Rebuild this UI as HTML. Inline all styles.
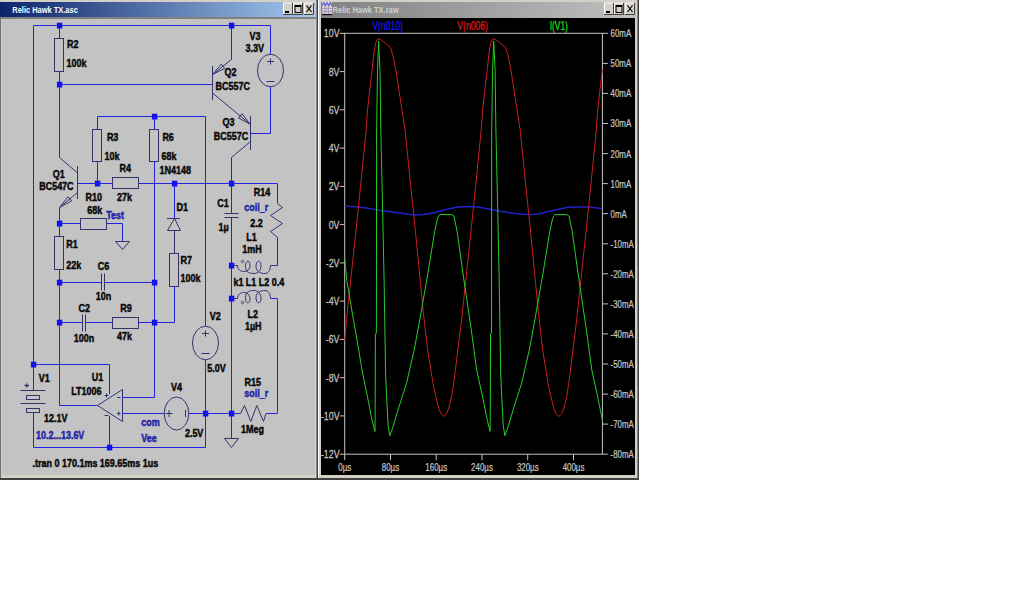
<!DOCTYPE html>
<html><head><meta charset="utf-8"><style>
html,body{margin:0;padding:0;background:#fff;width:1018px;height:591px;overflow:hidden}
svg{position:absolute;left:0;top:0}
text{font-family:"Liberation Sans",sans-serif}
</style></head><body>
<svg width="1018" height="591" viewBox="0 0 1018 591">
<defs>
<linearGradient id="ga" x1="0" x2="1" y1="0" y2="0"><stop offset="0" stop-color="#0a246a"/><stop offset="1" stop-color="#a6caf0"/></linearGradient>
<linearGradient id="gi" x1="0" x2="1" y1="0" y2="0"><stop offset="0" stop-color="#808080"/><stop offset="1" stop-color="#c0c0c0"/></linearGradient>
</defs>
<!-- top strip -->
<rect x="0" y="0" width="639" height="2" fill="#d4d0c8"/>
<!-- schematic window -->
<rect x="0" y="0" width="318" height="480" fill="#d4d0c8"/>
<rect x="0" y="478" width="318" height="2" fill="#404040"/>
<rect x="316.5" y="0" width="1.5" height="480" fill="#404040"/>
<rect x="0" y="17" width="316" height="2" fill="#808080"/>
<rect x="0" y="19" width="1" height="459" fill="#707070"/>
<rect x="0" y="2" width="316" height="15" fill="url(#ga)"/>
<rect x="2" y="19" width="313" height="456" fill="#c3c3c3"/>
<text transform="translate(12.3,13.2) scale(0.77,1)" fill="#ffffff" font-size="9.7" font-weight="bold">Relic Hawk TX.asc</text>
<g id="btns">
<rect x="283" y="2.5" width="9.5" height="12" fill="#d4d0c8"/>
<rect x="293" y="2.5" width="9.5" height="12" fill="#d4d0c8"/>
<rect x="304" y="2.5" width="9.5" height="12" fill="#d4d0c8"/>
</g>
<g stroke-width="1" fill="none">
<path d="M283.5,14 V3 H292" stroke="#fff"/><path d="M292.5,3 V14.5 H283" stroke="#404040"/>
<path d="M293.5,14 V3 H302" stroke="#fff"/><path d="M302.5,3 V14.5 H293" stroke="#404040"/>
<path d="M304.5,14 V3 H313" stroke="#fff"/><path d="M313.5,3 V14.5 H304" stroke="#404040"/>
</g>
<rect x="285" y="11" width="4" height="2" fill="#000"/>
<rect x="295" y="5.5" width="6" height="7" fill="none" stroke="#000" stroke-width="1"/><rect x="295" y="5" width="6" height="2" fill="#000"/>
<path d="M306.5,5.5 L311.5,12 M311.5,5.5 L306.5,12" stroke="#000" stroke-width="1.2"/>
<g font-weight="bold">
<line x1="33.5" y1="25.5" x2="270.5" y2="25.5" stroke="#2424e0" stroke-width="1.0"/><line x1="33.5" y1="25.5" x2="33.5" y2="390.5" stroke="#2424e0" stroke-width="1.0"/><line x1="33.5" y1="412.5" x2="33.5" y2="447.5" stroke="#2424e0" stroke-width="1.0"/><line x1="33.5" y1="447.5" x2="205.5" y2="447.5" stroke="#2424e0" stroke-width="1.0"/><line x1="59.5" y1="25.5" x2="59.5" y2="38.5" stroke="#2424e0" stroke-width="1.0"/><rect x="54.5" y="38.5" width="9.0" height="33.0" stroke="#33336e" stroke-width="1" fill="none"/><line x1="59.5" y1="71.5" x2="59.5" y2="157.5" stroke="#2424e0" stroke-width="1.0"/><rect x="56.9" y="22.7" width="5.4" height="5.8" fill="#1010f0"/><rect x="56.9" y="81.7" width="5.4" height="5.8" fill="#1010f0"/><line x1="59.5" y1="84.5" x2="212.5" y2="84.5" stroke="#2424e0" stroke-width="1.0"/><line x1="231.5" y1="25.5" x2="231.5" y2="59.5" stroke="#2424e0" stroke-width="1.0"/><rect x="228.9" y="22.7" width="5.4" height="5.8" fill="#1010f0"/><line x1="231.5" y1="59.5" x2="212.5" y2="74.5" stroke="#33336e" stroke-width="1.0"/><line x1="212.5" y1="66" x2="212.5" y2="100" stroke="#33336e" stroke-width="1.0"/><polygon points="212.80,74.30 221.26,64.04 224.73,68.43" stroke="#33336e" stroke-width="1" fill="none"/><line x1="212.5" y1="93" x2="250.5" y2="124.5" stroke="#33336e" stroke-width="1.0"/><polygon points="250.20,124.20 238.40,118.07 241.97,113.75" stroke="#33336e" stroke-width="1" fill="none"/><line x1="270.5" y1="25.5" x2="270.5" y2="54.5" stroke="#2424e0" stroke-width="1.0"/><ellipse cx="270.5" cy="70.5" rx="13" ry="16.3" stroke="#33336e" stroke-width="1" fill="none"/><line x1="267" y1="61.5" x2="274" y2="61.5" stroke="#33336e" stroke-width="1.0"/><line x1="270.5" y1="58.5" x2="270.5" y2="64.5" stroke="#33336e" stroke-width="1.0"/><line x1="266.5" y1="81.5" x2="274.5" y2="81.5" stroke="#33336e" stroke-width="1.0"/><line x1="270.5" y1="86.8" x2="270.5" y2="133.5" stroke="#2424e0" stroke-width="1.0"/><line x1="250.5" y1="133.5" x2="270.5" y2="133.5" stroke="#2424e0" stroke-width="1.0"/><line x1="250.5" y1="116" x2="250.5" y2="150" stroke="#33336e" stroke-width="1.0"/><line x1="250.5" y1="141.5" x2="231.5" y2="157.5" stroke="#33336e" stroke-width="1.0"/><line x1="231.5" y1="157.5" x2="231.5" y2="213.5" stroke="#2424e0" stroke-width="1.0"/><line x1="224.5" y1="213.5" x2="238.5" y2="213.5" stroke="#33336e" stroke-width="1.0"/><line x1="224.5" y1="217.5" x2="238.5" y2="217.5" stroke="#33336e" stroke-width="1.0"/><line x1="231.5" y1="217.5" x2="231.5" y2="438" stroke="#2424e0" stroke-width="1.0"/><rect x="228.9" y="180.7" width="5.4" height="5.8" fill="#1010f0"/><rect x="228.9" y="262.7" width="5.4" height="5.8" fill="#1010f0"/><rect x="228.9" y="295.7" width="5.4" height="5.8" fill="#1010f0"/><rect x="228.9" y="410.7" width="5.4" height="5.8" fill="#1010f0"/><polyline points="224.5,438.5 238.5,438.5 231.5,447.5 224.5,438.5" stroke="#33336e" stroke-width="1.0" fill="none"/><line x1="97.5" y1="116.5" x2="205.5" y2="116.5" stroke="#2424e0" stroke-width="1.0"/><rect x="151.9" y="113.7" width="5.4" height="5.8" fill="#1010f0"/><line x1="97.5" y1="116.5" x2="97.5" y2="129.5" stroke="#2424e0" stroke-width="1.0"/><rect x="92.5" y="129.5" width="9.0" height="32.0" stroke="#33336e" stroke-width="1" fill="none"/><line x1="97.5" y1="161.5" x2="97.5" y2="183.5" stroke="#2424e0" stroke-width="1.0"/><rect x="94.9" y="180.7" width="5.4" height="5.8" fill="#1010f0"/><line x1="154.5" y1="116.5" x2="154.5" y2="129.5" stroke="#2424e0" stroke-width="1.0"/><rect x="149.5" y="129.5" width="9.0" height="32.0" stroke="#33336e" stroke-width="1" fill="none"/><line x1="154.5" y1="161.5" x2="154.5" y2="397.5" stroke="#2424e0" stroke-width="1.0"/><rect x="151.9" y="279.7" width="5.4" height="5.8" fill="#1010f0"/><rect x="151.9" y="319.7" width="5.4" height="5.8" fill="#1010f0"/><line x1="205.5" y1="116.5" x2="205.5" y2="326" stroke="#2424e0" stroke-width="1.0"/><ellipse cx="205.5" cy="343" rx="13" ry="16.8" stroke="#33336e" stroke-width="1" fill="none"/><line x1="202" y1="333.5" x2="209" y2="333.5" stroke="#33336e" stroke-width="1.0"/><line x1="205.5" y1="330.5" x2="205.5" y2="336.5" stroke="#33336e" stroke-width="1.0"/><line x1="201.5" y1="353.5" x2="209.5" y2="353.5" stroke="#33336e" stroke-width="1.0"/><line x1="205.5" y1="359.8" x2="205.5" y2="447.5" stroke="#2424e0" stroke-width="1.0"/><rect x="202.9" y="410.7" width="5.4" height="5.8" fill="#1010f0"/><line x1="77.5" y1="183.5" x2="112.5" y2="183.5" stroke="#2424e0" stroke-width="1.0"/><rect x="112.5" y="177.5" width="26.0" height="11.0" stroke="#33336e" stroke-width="1" fill="none"/><line x1="138.5" y1="183.5" x2="277.5" y2="183.5" stroke="#2424e0" stroke-width="1.0"/><line x1="277.5" y1="183.5" x2="277.5" y2="203.5" stroke="#2424e0" stroke-width="1.0"/><rect x="171.9" y="180.7" width="5.4" height="5.8" fill="#1010f0"/><polyline points="277.5,203.5 282.5,207.5 270.5,215.5 282.5,223.5 270.5,231.5 277.5,237.5 277.5,265.5 270.5,265.5" stroke="#33336e" stroke-width="1.0" fill="none"/><path d="M231.5,265.5 H237.5 C237.5,273.5 250,273.5 250,265.5 C250,259.5 245.5,259.5 245.5,266.5 C245.5,272.5 250,273.5 254,273.5 C258,273.5 261,270.5 261,265.5 C261,259.5 256,259.5 256,266.5 C256,272.5 262,273.5 265,273.5 C268,273.5 270.5,270.5 270.5,265.5" stroke="#33336e" stroke-width="1" fill="none"/><path d="M231.5,298.5 H237.5 C237.5,290.5 250,290.5 250,298.5 C250,304.5 245.5,304.5 245.5,297.5 C245.5,291.5 250,290.5 254,290.5 C258,290.5 261,293.5 261,298.5 C261,304.5 256,304.5 256,297.5 C256,291.5 262,290.5 265,290.5 C268,290.5 270.5,293.5 270.5,298.5" stroke="#33336e" stroke-width="1" fill="none"/><polyline points="270.5,298.5 277.5,298.5 277.5,413.5 266,413.5" stroke="#2424e0" stroke-width="1.0" fill="none"/><circle cx="242.5" cy="261.5" r="1.3" stroke="#33336e" stroke-width="0.8" fill="none"/><circle cx="242.5" cy="302.5" r="1.3" stroke="#33336e" stroke-width="0.8" fill="none"/><line x1="174.5" y1="183.5" x2="174.5" y2="218.5" stroke="#2424e0" stroke-width="1.0"/><line x1="167" y1="218.5" x2="180" y2="218.5" stroke="#33336e" stroke-width="1.0"/><polyline points="174.5,218.5 180.5,230.5 167.5,230.5 174.5,218.5" stroke="#33336e" stroke-width="1.0" fill="none"/><line x1="174.5" y1="230.5" x2="174.5" y2="253.5" stroke="#33336e" stroke-width="1.0"/><rect x="169.5" y="253.5" width="9.0" height="33.0" stroke="#33336e" stroke-width="1" fill="none"/><line x1="174.5" y1="286.5" x2="174.5" y2="322.5" stroke="#2424e0" stroke-width="1.0"/><line x1="154.5" y1="322.5" x2="174.5" y2="322.5" stroke="#2424e0" stroke-width="1.0"/><line x1="77.5" y1="166" x2="77.5" y2="199" stroke="#33336e" stroke-width="1.0"/><line x1="59.5" y1="157.5" x2="77.5" y2="173" stroke="#33336e" stroke-width="1.0"/><line x1="77.5" y1="192.5" x2="59.5" y2="207.5" stroke="#33336e" stroke-width="1.0"/><polygon points="59.80,207.20 68.01,196.74 71.59,201.05" stroke="#33336e" stroke-width="1" fill="none"/><line x1="59.5" y1="207.5" x2="59.5" y2="236.5" stroke="#2424e0" stroke-width="1.0"/><rect x="56.9" y="220.7" width="5.4" height="5.8" fill="#1010f0"/><rect x="54.5" y="236.5" width="9.0" height="33.0" stroke="#33336e" stroke-width="1" fill="none"/><line x1="59.5" y1="269.5" x2="59.5" y2="405.5" stroke="#2424e0" stroke-width="1.0"/><rect x="56.9" y="279.7" width="5.4" height="5.8" fill="#1010f0"/><rect x="56.9" y="319.7" width="5.4" height="5.8" fill="#1010f0"/><line x1="59.5" y1="223.5" x2="80.5" y2="223.5" stroke="#2424e0" stroke-width="1.0"/><rect x="80.5" y="218.5" width="26.0" height="11.0" stroke="#33336e" stroke-width="1" fill="none"/><line x1="106.5" y1="223.5" x2="122.5" y2="223.5" stroke="#2424e0" stroke-width="1.0"/><line x1="122.5" y1="223.5" x2="122.5" y2="241" stroke="#2424e0" stroke-width="1.0"/><polyline points="115.5,241.5 129.5,241.5 122.5,249.5 115.5,241.5" stroke="#33336e" stroke-width="1.0" fill="none"/><line x1="59.5" y1="282.5" x2="101.5" y2="282.5" stroke="#2424e0" stroke-width="1.0"/><line x1="101.5" y1="273.5" x2="101.5" y2="290.5" stroke="#33336e" stroke-width="1.0"/><line x1="104.5" y1="273.5" x2="104.5" y2="290.5" stroke="#33336e" stroke-width="1.0"/><line x1="104.5" y1="282.5" x2="154.5" y2="282.5" stroke="#2424e0" stroke-width="1.0"/><line x1="59.5" y1="322.5" x2="82.5" y2="322.5" stroke="#2424e0" stroke-width="1.0"/><line x1="82.5" y1="314.5" x2="82.5" y2="331.5" stroke="#33336e" stroke-width="1.0"/><line x1="85.5" y1="314.5" x2="85.5" y2="331.5" stroke="#33336e" stroke-width="1.0"/><line x1="85.5" y1="322.5" x2="112.5" y2="322.5" stroke="#2424e0" stroke-width="1.0"/><rect x="112.5" y="317.5" width="26.0" height="11.0" stroke="#33336e" stroke-width="1" fill="none"/><line x1="138.5" y1="322.5" x2="154.5" y2="322.5" stroke="#2424e0" stroke-width="1.0"/><line x1="33.5" y1="364.5" x2="109.5" y2="364.5" stroke="#2424e0" stroke-width="1.0"/><rect x="30.9" y="361.7" width="5.4" height="5.8" fill="#1010f0"/><line x1="109.5" y1="364.5" x2="109.5" y2="394" stroke="#2424e0" stroke-width="1.0"/><line x1="20.5" y1="390.5" x2="45.5" y2="390.5" stroke="#33336e" stroke-width="1.0"/><rect x="26.5" y="395.5" width="13.0" height="4.0" stroke="#33336e" stroke-width="1" fill="none"/><line x1="20.5" y1="403.5" x2="45.5" y2="403.5" stroke="#33336e" stroke-width="1.0"/><rect x="26.5" y="408.5" width="13.0" height="4.0" stroke="#33336e" stroke-width="1" fill="none"/><line x1="24.5" y1="385.5" x2="29" y2="385.5" stroke="#33336e" stroke-width="1.3"/><line x1="26.7" y1="383.5" x2="26.7" y2="387.5" stroke="#33336e" stroke-width="1.3"/><polyline points="122.5,389.5 97.5,405.5 122.5,421.5 122.5,389.5" stroke="#33336e" stroke-width="1.0" fill="none"/><line x1="59.5" y1="405.5" x2="97.5" y2="405.5" stroke="#2424e0" stroke-width="1.0"/><line x1="122.5" y1="397.5" x2="154.5" y2="397.5" stroke="#2424e0" stroke-width="1.0"/><line x1="122.5" y1="413.5" x2="164" y2="413.5" stroke="#2424e0" stroke-width="1.0"/><line x1="109.5" y1="416" x2="109.5" y2="447.5" stroke="#2424e0" stroke-width="1.0"/><rect x="106.9" y="444.7" width="5.4" height="5.8" fill="#1010f0"/><line x1="117" y1="397.5" x2="120.5" y2="397.5" stroke="#33336e" stroke-width="1.0"/><line x1="117" y1="413.5" x2="120.5" y2="413.5" stroke="#33336e" stroke-width="1.0"/><line x1="118.8" y1="411.5" x2="118.8" y2="415.5" stroke="#33336e" stroke-width="1.0"/><line x1="104.5" y1="395.5" x2="108.5" y2="395.5" stroke="#33336e" stroke-width="1.0"/><line x1="106.5" y1="393.5" x2="106.5" y2="397.5" stroke="#33336e" stroke-width="1.0"/><line x1="104.5" y1="415.5" x2="108.5" y2="415.5" stroke="#33336e" stroke-width="1.0"/><ellipse cx="176.5" cy="413.5" rx="12.3" ry="16.5" stroke="#33336e" stroke-width="1" fill="none"/><line x1="164.5" y1="413.5" x2="164.2" y2="413.5" stroke="#33336e" stroke-width="1.0"/><line x1="165.5" y1="413.5" x2="172.5" y2="413.5" stroke="#33336e" stroke-width="1.0"/><line x1="169" y1="410" x2="169" y2="417" stroke="#33336e" stroke-width="1.0"/><line x1="185.5" y1="410" x2="185.5" y2="417" stroke="#33336e" stroke-width="1.0"/><line x1="188.8" y1="413.5" x2="240.5" y2="413.5" stroke="#2424e0" stroke-width="1.0"/><polyline points="240.5,413.5 244.5,405.5 250.8,421.5 256.8,405.5 263.5,421.5 266,413.5" stroke="#33336e" stroke-width="1.0" fill="none"/><text transform="translate(67.0,48) scale(0.88,1)" fill="#080808" stroke="#080808" stroke-width="0.45" font-size="10.2">R2</text><text transform="translate(66.6,66.5) scale(0.88,1)" fill="#080808" stroke="#080808" stroke-width="0.45" font-size="10.2">100k</text><text transform="translate(249.6,39.5) scale(0.88,1)" fill="#080808" stroke="#080808" stroke-width="0.45" font-size="10.2">V3</text><text transform="translate(245.6,51.5) scale(0.88,1)" fill="#080808" stroke="#080808" stroke-width="0.45" font-size="10.2">3.3V</text><text transform="translate(224.6,76) scale(0.88,1)" fill="#080808" stroke="#080808" stroke-width="0.45" font-size="10.2">Q2</text><text transform="translate(215.6,89.7) scale(0.88,1)" fill="#080808" stroke="#080808" stroke-width="0.45" font-size="10.2">BC557C</text><text transform="translate(222.6,125.8) scale(0.88,1)" fill="#080808" stroke="#080808" stroke-width="0.45" font-size="10.2">Q3</text><text transform="translate(213.79999999999998,139.8) scale(0.88,1)" fill="#080808" stroke="#080808" stroke-width="0.45" font-size="10.2">BC557C</text><text transform="translate(106.89999999999999,140.7) scale(0.88,1)" fill="#080808" stroke="#080808" stroke-width="0.45" font-size="10.2">R3</text><text transform="translate(104.6,159.7) scale(0.88,1)" fill="#080808" stroke="#080808" stroke-width="0.45" font-size="10.2">10k</text><text transform="translate(162.4,141) scale(0.88,1)" fill="#080808" stroke="#080808" stroke-width="0.45" font-size="10.2">R6</text><text transform="translate(161.6,160) scale(0.88,1)" fill="#080808" stroke="#080808" stroke-width="0.45" font-size="10.2">68k</text><text transform="translate(52.800000000000004,177.8) scale(0.88,1)" fill="#080808" stroke="#080808" stroke-width="0.45" font-size="10.2">Q1</text><text transform="translate(39.2,189.8) scale(0.88,1)" fill="#080808" stroke="#080808" stroke-width="0.45" font-size="10.2">BC547C</text><text transform="translate(119.6,172) scale(0.88,1)" fill="#080808" stroke="#080808" stroke-width="0.45" font-size="10.2">R4</text><text transform="translate(117.0,201) scale(0.88,1)" fill="#080808" stroke="#080808" stroke-width="0.45" font-size="10.2">27k</text><text transform="translate(159.6,174.2) scale(0.88,1)" fill="#080808" stroke="#080808" stroke-width="0.45" font-size="10.2">1N4148</text><text transform="translate(85.5,200.6) scale(0.88,1)" fill="#080808" stroke="#080808" stroke-width="0.45" font-size="10.2">R10</text><text transform="translate(87.3,213.5) scale(0.88,1)" fill="#080808" stroke="#080808" stroke-width="0.45" font-size="10.2">68k</text><text transform="translate(176.6,210.8) scale(0.88,1)" fill="#080808" stroke="#080808" stroke-width="0.45" font-size="10.2">D1</text><text transform="translate(217.2,207.4) scale(0.88,1)" fill="#080808" stroke="#080808" stroke-width="0.45" font-size="10.2">C1</text><text transform="translate(218.6,231) scale(0.88,1)" fill="#080808" stroke="#080808" stroke-width="0.45" font-size="10.2">1µ</text><text transform="translate(253.7,196) scale(0.88,1)" fill="#080808" stroke="#080808" stroke-width="0.45" font-size="10.2">R14</text><text transform="translate(250.29999999999998,227) scale(0.88,1)" fill="#080808" stroke="#080808" stroke-width="0.45" font-size="10.2">2.2</text><text transform="translate(246.29999999999998,240.6) scale(0.88,1)" fill="#080808" stroke="#080808" stroke-width="0.45" font-size="10.2">L1</text><text transform="translate(242.2,253.4) scale(0.88,1)" fill="#080808" stroke="#080808" stroke-width="0.45" font-size="10.2">1mH</text><text transform="translate(233.4,285.8) scale(0.88,1)" fill="#080808" stroke="#080808" stroke-width="0.45" font-size="10.2">k1 L1 L2 0.4</text><text transform="translate(247.6,317.7) scale(0.88,1)" fill="#080808" stroke="#080808" stroke-width="0.45" font-size="10.2">L2</text><text transform="translate(244.9,330) scale(0.88,1)" fill="#080808" stroke="#080808" stroke-width="0.45" font-size="10.2">1µH</text><text transform="translate(209.7,320.4) scale(0.88,1)" fill="#080808" stroke="#080808" stroke-width="0.45" font-size="10.2">V2</text><text transform="translate(207.29999999999998,371.9) scale(0.88,1)" fill="#080808" stroke="#080808" stroke-width="0.45" font-size="10.2">5.0V</text><text transform="translate(66.3,248) scale(0.88,1)" fill="#080808" stroke="#080808" stroke-width="0.45" font-size="10.2">R1</text><text transform="translate(66.3,268.6) scale(0.88,1)" fill="#080808" stroke="#080808" stroke-width="0.45" font-size="10.2">22k</text><text transform="translate(97.8,269.9) scale(0.88,1)" fill="#080808" stroke="#080808" stroke-width="0.45" font-size="10.2">C6</text><text transform="translate(95.8,299.7) scale(0.88,1)" fill="#080808" stroke="#080808" stroke-width="0.45" font-size="10.2">10n</text><text transform="translate(180.6,263.8) scale(0.88,1)" fill="#080808" stroke="#080808" stroke-width="0.45" font-size="10.2">R7</text><text transform="translate(180.6,282.1) scale(0.88,1)" fill="#080808" stroke="#080808" stroke-width="0.45" font-size="10.2">100k</text><text transform="translate(78.5,311.5) scale(0.88,1)" fill="#080808" stroke="#080808" stroke-width="0.45" font-size="10.2">C2</text><text transform="translate(73.69999999999999,341.7) scale(0.88,1)" fill="#080808" stroke="#080808" stroke-width="0.45" font-size="10.2">100n</text><text transform="translate(120.19999999999999,311.5) scale(0.88,1)" fill="#080808" stroke="#080808" stroke-width="0.45" font-size="10.2">R9</text><text transform="translate(117.0,339.7) scale(0.88,1)" fill="#080808" stroke="#080808" stroke-width="0.45" font-size="10.2">47k</text><text transform="translate(38.7,381.7) scale(0.88,1)" fill="#080808" stroke="#080808" stroke-width="0.45" font-size="10.2">V1</text><text transform="translate(91.8,380.7) scale(0.88,1)" fill="#080808" stroke="#080808" stroke-width="0.45" font-size="10.2">U1</text><text transform="translate(71.19999999999999,395.2) scale(0.88,1)" fill="#080808" stroke="#080808" stroke-width="0.45" font-size="10.2">LT1006</text><text transform="translate(44.1,422.2) scale(0.88,1)" fill="#080808" stroke="#080808" stroke-width="0.45" font-size="10.2">12.1V</text><text transform="translate(170.9,391.4) scale(0.88,1)" fill="#080808" stroke="#080808" stroke-width="0.45" font-size="10.2">V4</text><text transform="translate(184.9,437.1) scale(0.88,1)" fill="#080808" stroke="#080808" stroke-width="0.45" font-size="10.2">2.5V</text><text transform="translate(244.5,386.3) scale(0.88,1)" fill="#080808" stroke="#080808" stroke-width="0.45" font-size="10.2">R15</text><text transform="translate(241.1,432.8) scale(0.88,1)" fill="#080808" stroke="#080808" stroke-width="0.45" font-size="10.2">1Meg</text><text transform="translate(32.6,466.5) scale(0.88,1)" fill="#080808" stroke="#080808" stroke-width="0.45" font-size="10.2">.tran 0 170.1ms 169.65ms 1us</text><text transform="translate(106.19999999999999,219.1) scale(0.88,1)" fill="#2222a8" stroke="#2222a8" stroke-width="0.45" font-size="10.2">Test</text><text transform="translate(244.29999999999998,211.4) scale(0.88,1)" fill="#2222a8" stroke="#2222a8" stroke-width="0.45" font-size="10.2">coil_r</text><text transform="translate(36.0,438.5) scale(0.88,1)" fill="#2222a8" stroke="#2222a8" stroke-width="0.45" font-size="10.2">10.2...13.6V</text><text transform="translate(141.29999999999998,425.6) scale(0.88,1)" fill="#2222a8" stroke="#2222a8" stroke-width="0.45" font-size="10.2">com</text><text transform="translate(141.29999999999998,442.3) scale(0.88,1)" fill="#2222a8" stroke="#2222a8" stroke-width="0.45" font-size="10.2">Vee</text><text transform="translate(244.2,397.3) scale(0.88,1)" fill="#2222a8" stroke="#2222a8" stroke-width="0.45" font-size="10.2">soil_r</text>
</g>
<!-- plot window -->
<rect x="318" y="0" width="321" height="480" fill="#d4d0c8"/>
<rect x="318" y="0" width="1" height="480" fill="#ffffff"/>
<rect x="318" y="478" width="321" height="2" fill="#404040"/>
<rect x="637.5" y="0" width="1.5" height="480" fill="#404040"/>
<rect x="321" y="2" width="315" height="16" fill="url(#gi)"/>
<rect x="321" y="18" width="314" height="457" fill="#000"/>
<text transform="translate(332.6,13.2) scale(0.77,1)" fill="#d4d0c8" font-size="9.7" font-weight="bold">Relic Hawk TX.raw</text>
<rect x="322" y="2" width="10" height="12.5" fill="#cfc8dc"/>
<path d="M322,8.5 H332 M322,11.5 H332 M325,6 V14 M328.5,6 V14" stroke="#a090b0" stroke-width="0.7" fill="none"/>
<path d="M322,5.5 L323.7,2.8 L325.3,5.5 L327,2.8 L328.7,5.5 L330.3,2.8 L332,5.5" stroke="#5a5ad8" stroke-width="1.1" fill="none"/>
<rect x="322" y="14" width="10" height="1.2" fill="#101010"/>
<rect x="604" y="2.5" width="9.5" height="12" fill="#d4d0c8"/>
<rect x="614" y="2.5" width="9.5" height="12" fill="#d4d0c8"/>
<rect x="625" y="2.5" width="9.5" height="12" fill="#d4d0c8"/>
<g stroke-width="1" fill="none">
<path d="M604.5,14 V3 H613" stroke="#fff"/><path d="M613.5,3 V14.5 H604" stroke="#404040"/>
<path d="M614.5,14 V3 H623" stroke="#fff"/><path d="M623.5,3 V14.5 H614" stroke="#404040"/>
<path d="M625.5,14 V3 H634" stroke="#fff"/><path d="M634.5,3 V14.5 H625" stroke="#404040"/>
</g>
<rect x="606" y="11" width="4" height="2" fill="#000"/>
<rect x="616" y="5.5" width="6" height="7" fill="none" stroke="#000" stroke-width="1"/><rect x="616" y="5" width="6" height="2" fill="#000"/>
<path d="M627.5,5.5 L632.5,12 M632.5,5.5 L627.5,12" stroke="#000" stroke-width="1.2"/>
<g>
<rect x="344.7" y="33.3" width="257.7" height="420.9" stroke="#c4c4c4" stroke-width="1" fill="none"/><line x1="339.7" y1="33.3" x2="344.7" y2="33.3" stroke="#c4c4c4" stroke-width="1"/><text transform="translate(339.5,37.3) scale(0.8,1)" fill="#c4c4c4" stroke="#c4c4c4" stroke-width="0.25" font-size="11" text-anchor="end">10V</text><line x1="339.7" y1="71.6" x2="344.7" y2="71.6" stroke="#c4c4c4" stroke-width="1"/><text transform="translate(339.5,75.56363636363636) scale(0.8,1)" fill="#c4c4c4" stroke="#c4c4c4" stroke-width="0.25" font-size="11" text-anchor="end">8V</text><line x1="339.7" y1="109.8" x2="344.7" y2="109.8" stroke="#c4c4c4" stroke-width="1"/><text transform="translate(339.5,113.82727272727271) scale(0.8,1)" fill="#c4c4c4" stroke="#c4c4c4" stroke-width="0.25" font-size="11" text-anchor="end">6V</text><line x1="339.7" y1="148.1" x2="344.7" y2="148.1" stroke="#c4c4c4" stroke-width="1"/><text transform="translate(339.5,152.09090909090907) scale(0.8,1)" fill="#c4c4c4" stroke="#c4c4c4" stroke-width="0.25" font-size="11" text-anchor="end">4V</text><line x1="339.7" y1="186.4" x2="344.7" y2="186.4" stroke="#c4c4c4" stroke-width="1"/><text transform="translate(339.5,190.35454545454542) scale(0.8,1)" fill="#c4c4c4" stroke="#c4c4c4" stroke-width="0.25" font-size="11" text-anchor="end">2V</text><line x1="339.7" y1="224.6" x2="344.7" y2="224.6" stroke="#c4c4c4" stroke-width="1"/><text transform="translate(339.5,228.61818181818182) scale(0.8,1)" fill="#c4c4c4" stroke="#c4c4c4" stroke-width="0.25" font-size="11" text-anchor="end">0V</text><line x1="339.7" y1="262.9" x2="344.7" y2="262.9" stroke="#c4c4c4" stroke-width="1"/><text transform="translate(339.5,266.8818181818181) scale(0.8,1)" fill="#c4c4c4" stroke="#c4c4c4" stroke-width="0.25" font-size="11" text-anchor="end">-2V</text><line x1="339.7" y1="301.1" x2="344.7" y2="301.1" stroke="#c4c4c4" stroke-width="1"/><text transform="translate(339.5,305.1454545454545) scale(0.8,1)" fill="#c4c4c4" stroke="#c4c4c4" stroke-width="0.25" font-size="11" text-anchor="end">-4V</text><line x1="339.7" y1="339.4" x2="344.7" y2="339.4" stroke="#c4c4c4" stroke-width="1"/><text transform="translate(339.5,343.4090909090909) scale(0.8,1)" fill="#c4c4c4" stroke="#c4c4c4" stroke-width="0.25" font-size="11" text-anchor="end">-6V</text><line x1="339.7" y1="377.7" x2="344.7" y2="377.7" stroke="#c4c4c4" stroke-width="1"/><text transform="translate(339.5,381.6727272727273) scale(0.8,1)" fill="#c4c4c4" stroke="#c4c4c4" stroke-width="0.25" font-size="11" text-anchor="end">-8V</text><line x1="339.7" y1="415.9" x2="344.7" y2="415.9" stroke="#c4c4c4" stroke-width="1"/><text transform="translate(339.5,419.93636363636364) scale(0.8,1)" fill="#c4c4c4" stroke="#c4c4c4" stroke-width="0.25" font-size="11" text-anchor="end">-10V</text><line x1="339.7" y1="454.2" x2="344.7" y2="454.2" stroke="#c4c4c4" stroke-width="1"/><text transform="translate(339.5,458.2) scale(0.8,1)" fill="#c4c4c4" stroke="#c4c4c4" stroke-width="0.25" font-size="11" text-anchor="end">-12V</text><line x1="602.4" y1="33.3" x2="607.9" y2="33.3" stroke="#c4c4c4" stroke-width="1"/><text transform="translate(610.6,37.3) scale(0.715,1)" fill="#c4c4c4" stroke="#c4c4c4" stroke-width="0.25" font-size="11" text-anchor="start">60mA</text><line x1="602.4" y1="63.4" x2="607.9" y2="63.4" stroke="#c4c4c4" stroke-width="1"/><text transform="translate(610.6,67.36428571428571) scale(0.715,1)" fill="#c4c4c4" stroke="#c4c4c4" stroke-width="0.25" font-size="11" text-anchor="start">50mA</text><line x1="602.4" y1="93.4" x2="607.9" y2="93.4" stroke="#c4c4c4" stroke-width="1"/><text transform="translate(610.6,97.42857142857142) scale(0.715,1)" fill="#c4c4c4" stroke="#c4c4c4" stroke-width="0.25" font-size="11" text-anchor="start">40mA</text><line x1="602.4" y1="123.5" x2="607.9" y2="123.5" stroke="#c4c4c4" stroke-width="1"/><text transform="translate(610.6,127.49285714285713) scale(0.715,1)" fill="#c4c4c4" stroke="#c4c4c4" stroke-width="0.25" font-size="11" text-anchor="start">30mA</text><line x1="602.4" y1="153.6" x2="607.9" y2="153.6" stroke="#c4c4c4" stroke-width="1"/><text transform="translate(610.6,157.55714285714285) scale(0.715,1)" fill="#c4c4c4" stroke="#c4c4c4" stroke-width="0.25" font-size="11" text-anchor="start">20mA</text><line x1="602.4" y1="183.6" x2="607.9" y2="183.6" stroke="#c4c4c4" stroke-width="1"/><text transform="translate(610.6,187.62142857142857) scale(0.715,1)" fill="#c4c4c4" stroke="#c4c4c4" stroke-width="0.25" font-size="11" text-anchor="start">10mA</text><line x1="602.4" y1="213.7" x2="607.9" y2="213.7" stroke="#c4c4c4" stroke-width="1"/><text transform="translate(610.6,217.68571428571425) scale(0.715,1)" fill="#c4c4c4" stroke="#c4c4c4" stroke-width="0.25" font-size="11" text-anchor="start">0mA</text><line x1="602.4" y1="243.8" x2="607.9" y2="243.8" stroke="#c4c4c4" stroke-width="1"/><text transform="translate(610.6,247.75) scale(0.715,1)" fill="#c4c4c4" stroke="#c4c4c4" stroke-width="0.25" font-size="11" text-anchor="start">-10mA</text><line x1="602.4" y1="273.8" x2="607.9" y2="273.8" stroke="#c4c4c4" stroke-width="1"/><text transform="translate(610.6,277.8142857142857) scale(0.715,1)" fill="#c4c4c4" stroke="#c4c4c4" stroke-width="0.25" font-size="11" text-anchor="start">-20mA</text><line x1="602.4" y1="303.9" x2="607.9" y2="303.9" stroke="#c4c4c4" stroke-width="1"/><text transform="translate(610.6,307.87857142857143) scale(0.715,1)" fill="#c4c4c4" stroke="#c4c4c4" stroke-width="0.25" font-size="11" text-anchor="start">-30mA</text><line x1="602.4" y1="333.9" x2="607.9" y2="333.9" stroke="#c4c4c4" stroke-width="1"/><text transform="translate(610.6,337.9428571428572) scale(0.715,1)" fill="#c4c4c4" stroke="#c4c4c4" stroke-width="0.25" font-size="11" text-anchor="start">-40mA</text><line x1="602.4" y1="364.0" x2="607.9" y2="364.0" stroke="#c4c4c4" stroke-width="1"/><text transform="translate(610.6,368.00714285714287) scale(0.715,1)" fill="#c4c4c4" stroke="#c4c4c4" stroke-width="0.25" font-size="11" text-anchor="start">-50mA</text><line x1="602.4" y1="394.1" x2="607.9" y2="394.1" stroke="#c4c4c4" stroke-width="1"/><text transform="translate(610.6,398.07142857142856) scale(0.715,1)" fill="#c4c4c4" stroke="#c4c4c4" stroke-width="0.25" font-size="11" text-anchor="start">-60mA</text><line x1="602.4" y1="424.1" x2="607.9" y2="424.1" stroke="#c4c4c4" stroke-width="1"/><text transform="translate(610.6,428.1357142857143) scale(0.715,1)" fill="#c4c4c4" stroke="#c4c4c4" stroke-width="0.25" font-size="11" text-anchor="start">-70mA</text><line x1="602.4" y1="454.2" x2="607.9" y2="454.2" stroke="#c4c4c4" stroke-width="1"/><text transform="translate(610.6,458.2) scale(0.715,1)" fill="#c4c4c4" stroke="#c4c4c4" stroke-width="0.25" font-size="11" text-anchor="start">-80mA</text><line x1="344.7" y1="454.2" x2="344.7" y2="460.2" stroke="#c4c4c4" stroke-width="1"/><text transform="translate(344.7,471.2) scale(0.72,1)" fill="#c4c4c4" stroke="#c4c4c4" stroke-width="0.25" font-size="11" text-anchor="middle">0µs</text><line x1="390.5" y1="454.2" x2="390.5" y2="460.2" stroke="#c4c4c4" stroke-width="1"/><text transform="translate(390.46,471.2) scale(0.72,1)" fill="#c4c4c4" stroke="#c4c4c4" stroke-width="0.25" font-size="11" text-anchor="middle">80µs</text><line x1="436.2" y1="454.2" x2="436.2" y2="460.2" stroke="#c4c4c4" stroke-width="1"/><text transform="translate(436.21999999999997,471.2) scale(0.72,1)" fill="#c4c4c4" stroke="#c4c4c4" stroke-width="0.25" font-size="11" text-anchor="middle">160µs</text><line x1="482.0" y1="454.2" x2="482.0" y2="460.2" stroke="#c4c4c4" stroke-width="1"/><text transform="translate(481.98,471.2) scale(0.72,1)" fill="#c4c4c4" stroke="#c4c4c4" stroke-width="0.25" font-size="11" text-anchor="middle">240µs</text><line x1="527.7" y1="454.2" x2="527.7" y2="460.2" stroke="#c4c4c4" stroke-width="1"/><text transform="translate(527.74,471.2) scale(0.72,1)" fill="#c4c4c4" stroke="#c4c4c4" stroke-width="0.25" font-size="11" text-anchor="middle">320µs</text><line x1="573.5" y1="454.2" x2="573.5" y2="460.2" stroke="#c4c4c4" stroke-width="1"/><text transform="translate(573.5,471.2) scale(0.72,1)" fill="#c4c4c4" stroke="#c4c4c4" stroke-width="0.25" font-size="11" text-anchor="middle">400µs</text><text transform="translate(372.2,29.6) scale(0.72,1)" fill="#1818f0" stroke="#1818f0" stroke-width="0.25" font-size="12" text-anchor="start">V(n010)</text><text transform="translate(457.3,29.6) scale(0.72,1)" fill="#e01818" stroke="#e01818" stroke-width="0.25" font-size="12" text-anchor="start">V(n006)</text><text transform="translate(549.7,29.6) scale(0.7,1)" fill="#18e018" stroke="#18e018" stroke-width="0.25" font-size="12" text-anchor="start">I(V1)</text><polyline points="344.7,206.3 352.0,206.5 365.0,207.8 380.6,210.5 400.0,213.0 413.5,215.0 422.0,214.8 433.0,213.0 445.0,209.8 457.5,207.0 468.0,206.5 477.8,207.0 490.0,209.2 500.0,211.3 515.0,213.5 528.0,214.6 538.0,214.0 555.0,210.0 568.0,207.3 576.1,207.0 589.7,207.0 602.0,208.7" stroke="#2020c8" stroke-width="1.4" fill="none" stroke-linejoin="round"/><polyline points="344.7,340.5 346.7,318.0 356.0,230.0 361.1,180.8 366.1,130.0 367.5,110.0 370.9,80.0 372.8,63.8 374.3,50.3 376.0,42.0 377.6,38.8 380.0,39.3 382.4,40.8 390.5,47.6 393.1,56.0 395.9,70.5 402.0,110.0 405.1,130.0 410.2,180.8 415.3,230.0 423.6,315.2 427.6,350.0 433.1,383.8 436.1,398.0 438.8,408.5 441.2,414.0 443.8,416.4 446.4,414.0 448.8,408.0 451.6,397.0 454.1,380.0 459.8,334.3 461.8,318.0 471.1,230.0 476.2,180.8 481.2,130.0 482.6,110.0 486.0,80.0 487.9,63.8 489.4,50.3 491.1,42.0 492.7,38.8 495.1,39.3 497.5,40.8 505.6,47.6 508.2,56.0 511.0,70.5 517.1,110.0 520.2,130.0 525.3,180.8 530.4,230.0 538.7,315.2 542.7,350.0 548.2,383.8 551.2,398.0 553.9,408.5 556.3,414.0 558.9,416.4 561.5,414.0 563.9,408.0 566.7,397.0 569.2,380.0 574.9,334.3 576.9,318.0 586.2,230.0 591.3,180.8 596.3,130.0 597.7,110.0 601.1,80.0 602.4,69.8" stroke="#c81e1e" stroke-width="1.0" fill="none" stroke-linejoin="round"/><polyline points="344.7,258.5 346.8,280.5 350.2,300.8 353.5,320.0 359.0,351.5 362.0,370.0 367.1,394.9 372.0,420.0 375.0,431.5 375.0,431.5 375.2,400.0 375.4,334.0 376.4,333.0 376.6,130.0 377.5,70.5 378.6,41.0 380.0,70.5 380.8,130.0 382.4,200.0 384.1,280.0 385.6,374.0 386.8,400.0 388.1,425.0 389.8,435.8 392.6,428.0 398.6,408.0 406.6,383.0 414.6,348.0 420.1,318.0 427.6,275.0 434.6,232.0 436.9,221.0 438.6,215.8 440.1,214.6 451.6,214.6 454.1,216.2 455.1,222.0 456.9,230.0 463.2,275.0 471.3,330.0 476.7,370.0 482.2,395.0 487.3,420.2 490.1,431.5 490.3,400.0 490.5,334.0 491.5,333.0 491.7,130.0 492.6,70.5 493.7,41.0 495.1,70.5 495.9,130.0 497.5,200.0 499.2,280.0 500.7,374.0 501.9,400.0 503.2,425.0 504.9,435.8 507.7,428.0 513.7,408.0 521.7,383.0 529.7,348.0 535.2,318.0 542.7,275.0 549.7,232.0 552.0,221.0 553.7,215.8 555.2,214.6 566.7,214.6 569.2,216.2 570.2,222.0 572.0,230.0 578.3,275.0 586.4,330.0 591.8,370.0 597.3,395.0 602.4,420.2" stroke="#28cc28" stroke-width="1.0" fill="none" stroke-linejoin="round"/>
</g>
</svg>
</body></html>
